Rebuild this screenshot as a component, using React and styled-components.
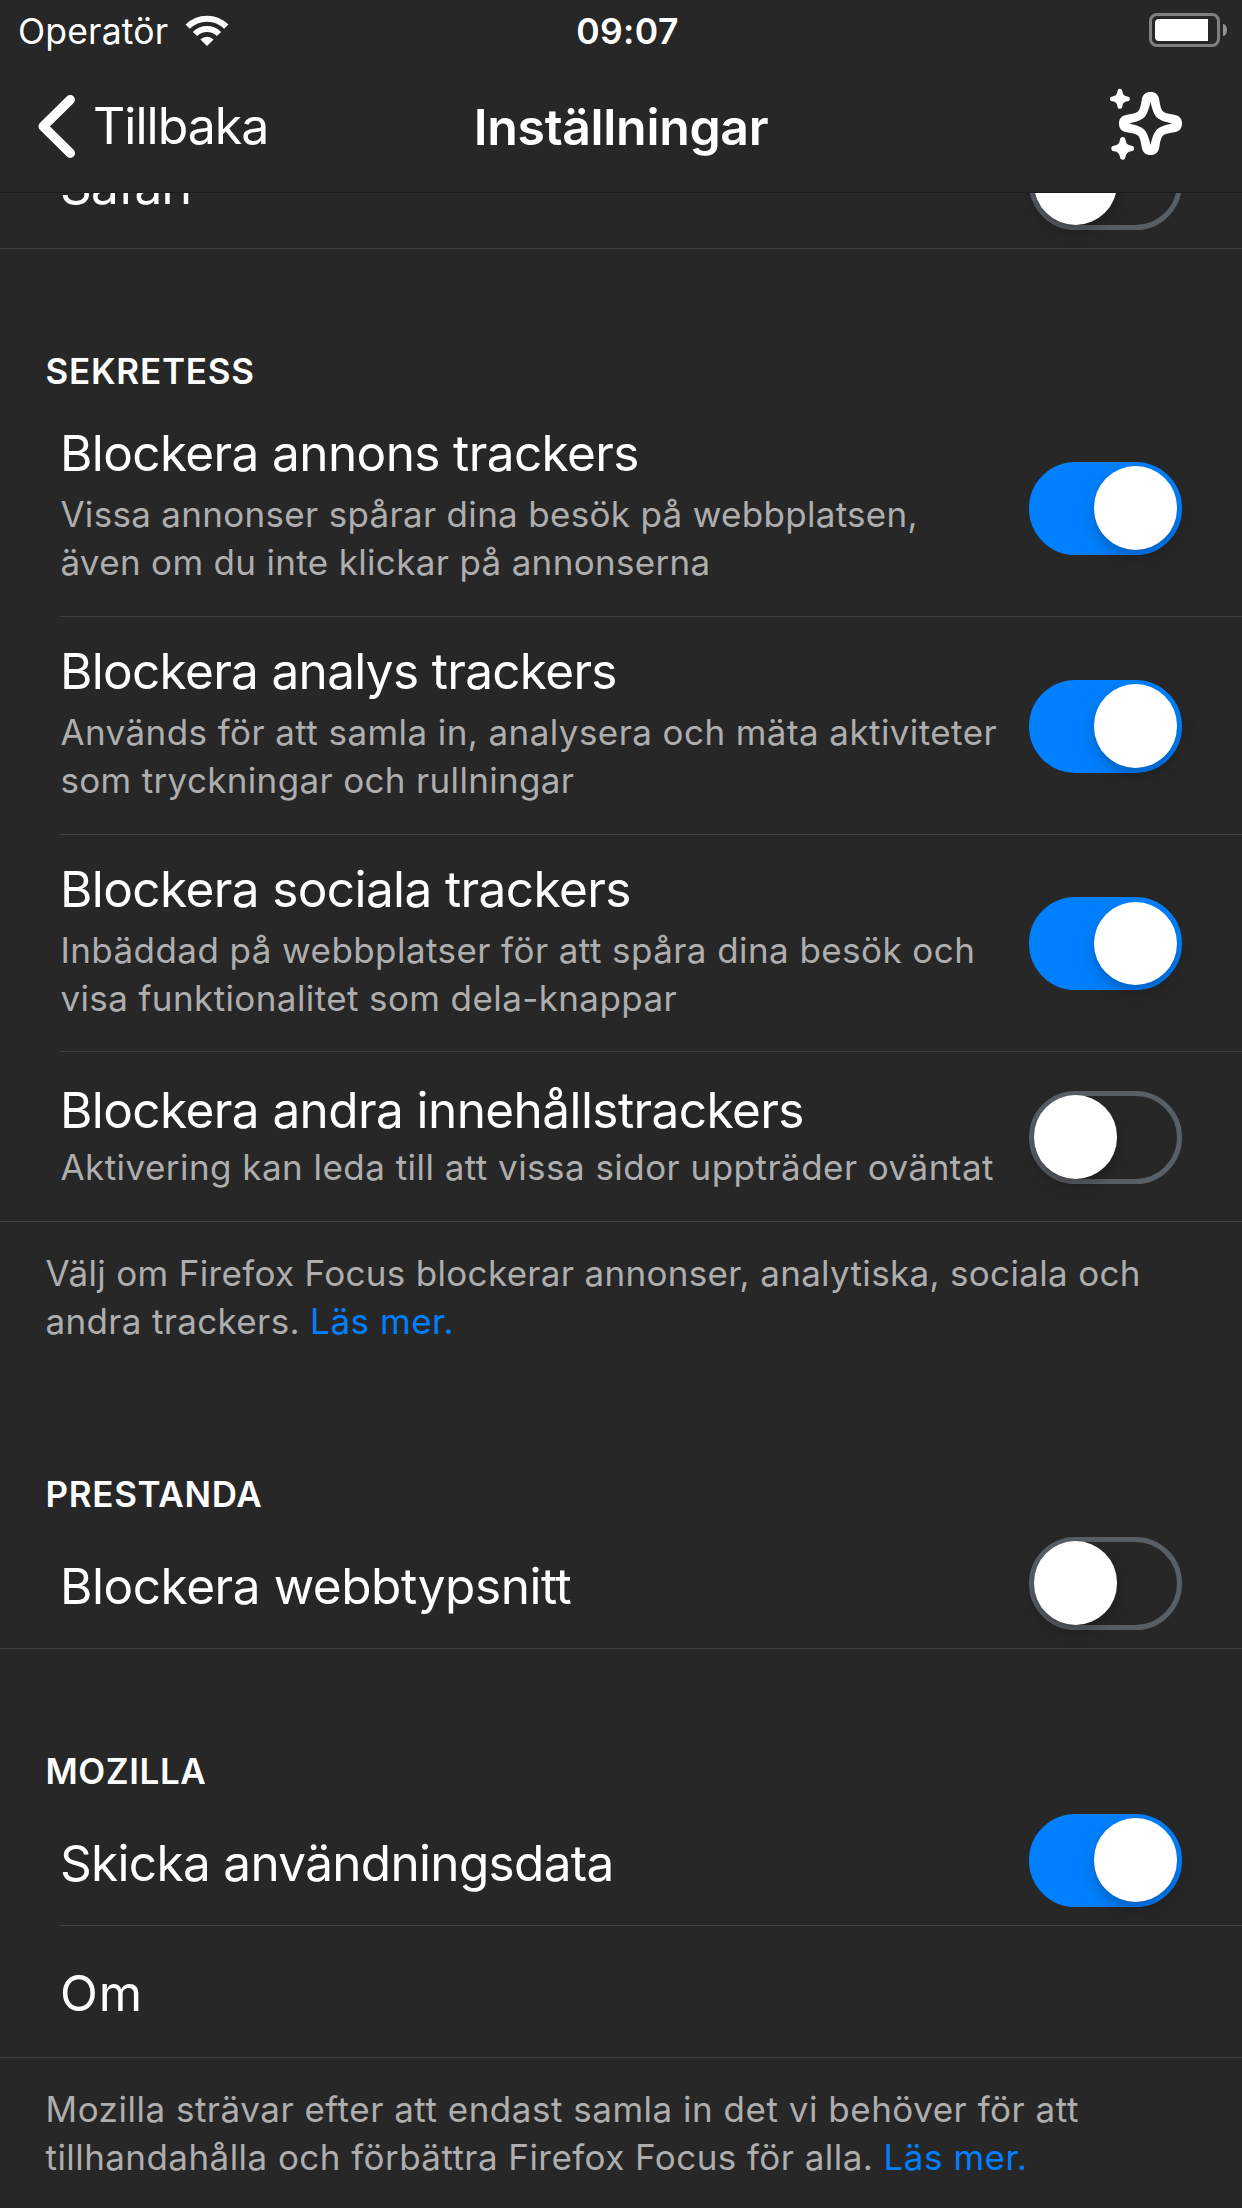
import React, { useState } from 'react';
import styled, { createGlobalStyle } from 'styled-components';

const GlobalStyle = createGlobalStyle`
  * { box-sizing: border-box; }
  html, body { margin: 0; background: #272727; }
  body {
    font-family: Inter, Roboto, "Liberation Sans", sans-serif;
    color: #fff;
    -webkit-font-smoothing: antialiased;
  }
`;

const Screen = styled.div`
  display: flex;
  flex-direction: column;
  width: 1242px;
  height: 2208px;
  overflow: hidden;
  background: #272727;
`;

/* Text with its own tracking */
const T = styled.span`
  white-space: pre;
  letter-spacing: ${(p) => p.$ls || 0}px;
`;

const StatusBar = styled.header`
  display: grid;
  grid-template-columns: 1fr auto 1fr;
  align-items: center;
  flex: none;
  height: 62px;
  padding: 0 15px 0 18px;
  font-size: 35.5px;
  line-height: 60px;
`;

const Carrier = styled.div`
  display: flex;
  align-items: center;
  gap: 17px;

  span { padding-top: 2px; }
`;

const Clock = styled.div`
  padding: 2px 0 0 10px;
  font-weight: 600;
`;

const Battery = styled.div`
  display: flex;
  align-items: center;
  justify-content: flex-end;
  gap: 3px;
  padding-bottom: 2px;
`;

const BatteryShell = styled.div`
  width: 71px;
  height: 34px;
  padding: 3px;
  border: 3px solid #808080;
  border-radius: 8px;
`;

const BatteryFill = styled.div`
  width: 53px;
  height: 22px;
  border-radius: 4px 0 0 4px;
  background: #fff;
`;

const BatteryNub = styled.div`
  width: 4px;
  height: 12px;
  border-radius: 0 4px 4px 0 / 0 6px 6px 0;
  background: #939393;
`;

const NavBar = styled.nav`
  display: grid;
  grid-template-columns: 1fr auto 1fr;
  align-items: center;
  flex: none;
  height: 131px;
  padding: 0 60px 2px 38px;
  border-bottom: 1px solid #1b1b1b;
  font-size: 50px;
  line-height: 60px;
`;

const BackButton = styled.button`
  display: flex;
  align-items: center;
  gap: 17px;
  padding: 0;
  border: 0;
  background: none;
  color: inherit;
  font: inherit;
`;

const NavTitle = styled.h1`
  margin: 0;
  padding: 1px 0 0 22px;
  font-size: 50px;
  font-weight: 600;
`;

const NavAction = styled.div`
  display: flex;
  justify-content: flex-end;
`;

const ScrollArea = styled.main`
  flex: 1;
  min-height: 0;
  overflow: hidden;
`;

const ScrolledRow = styled.div`
  display: flex;
  flex-direction: column;
  justify-content: flex-end;
  height: 56px;
  overflow: hidden;
`;

const Section = styled.section`
  display: flex;
  flex-direction: column;
`;

const SectionTitle = styled.h2`
  margin: 0;
  height: ${(p) => p.$height}px;
  padding: ${(p) => p.$top}px 45.5px 0;
  font-size: 35px;
  font-weight: 600;
  line-height: 48px;
`;

const Row = styled.div`
  display: flex;
  flex: none;
  height: ${(p) => p.$height}px;
  margin-left: ${(p) => (p.$last ? 0 : 60)}px;
  padding-left: ${(p) => (p.$last ? 60 : 0)}px;
  padding-right: 60px;
  border-bottom: 1px solid #414141;
`;

const Labels = styled.div`
  display: flex;
  flex: 1;
  flex-direction: column;
  padding-top: ${(p) => p.$top}px;
`;

const Title = styled.div`
  font-size: 49.5px;
  line-height: 60px;
`;

const Subtitle = styled.div`
  display: flex;
  flex-direction: column;
  margin-top: ${(p) => p.$gap}px;
  padding-left: 0.4px;
  color: #aeaeae;
  font-size: 35px;
  line-height: 48px;
`;

const Track = styled.button`
  display: flex;
  align-items: center;
  align-self: center;
  justify-content: ${(p) => (p.$on ? 'flex-end' : 'flex-start')};
  flex: none;
  width: 153px;
  height: 93px;
  margin: 1px 0 0;
  padding: 0;
  border: 5px solid ${(p) => (p.$on ? '#0080ff' : '#595f66')};
  border-radius: 47px;
  background: ${(p) => (p.$on ? '#0080ff' : 'transparent')};
`;

const Thumb = styled.span`
  width: 83.5px;
  height: 83.5px;
  margin: 0 -0.25px;
  border-radius: 50%;
  background: #fff;
  box-shadow: 0 8px 22px rgba(0, 0, 0, 0.16), 0 6px 6px rgba(0, 0, 0, 0.1);
`;

const Footer = styled.p`
  display: flex;
  flex-direction: column;
  margin: 0;
  height: ${(p) => p.$height}px;
  padding: 27px 45.5px 0;
  color: #aeaeae;
  font-size: 35px;
  line-height: 48px;
`;

const Link = styled.a`
  color: #0080ff;
  letter-spacing: 0.53px;
`;

const Wifi = () => (
  <svg width="44" height="32" viewBox="185 14 44 32" fill="none">
    <path d="M187.7 25.7A27.3 27.3 0 0 1 226.3 25.7" stroke="#fff" strokeWidth="6" />
    <path d="M195 33A17 17 0 0 1 219 33" stroke="#fff" strokeWidth="6" />
    <path d="M207 45L200.4 38.4A9.5 9.5 0 0 1 213.6 38.4Z" fill="#fff" />
  </svg>
);

const Chevron = () => (
  <svg width="38" height="65" viewBox="38 94 38 65" fill="none">
    <path d="M70.3 99.7L43.2 126.4L70.3 153.2" stroke="#fff" strokeWidth="9.4" strokeLinecap="round" strokeLinejoin="round" />
  </svg>
);

const SMALL_STAR =
  'M0 -10C1.6 -10 2.2 -9 2.4 -7.6C2.8 -4.4 4.4 -2.8 7.6 -2.4C9 -2.2 10 -1.6 10 0C10 1.6 9 2.2 7.6 2.4C4.4 2.8 2.8 4.4 2.4 7.6C2.2 9 1.6 10 0 10C-1.6 10 -2.2 9 -2.4 7.6C-2.8 4.4 -4.4 2.8 -7.6 2.4C-9 2.2 -10 1.6 -10 0C-10 -1.6 -9 -2.2 -7.6 -2.4C-4.4 -2.8 -2.8 -4.4 -2.4 -7.6C-2.2 -9 -1.6 -10 0 -10Z';

const Sparkles = () => (
  <svg width="73" height="77" viewBox="1109 88 73 77" fill="#fff">
    <path
      transform="translate(1150.5 123.5)"
      fillRule="evenodd"
      d="M-8.8 -23.5C-8 -29 -4.8 -31.5 0 -31.5C4.8 -31.5 8 -29 8.8 -23.5C9.8 -17 10.8 -13.8 12.3 -12.3C13.8 -10.8 17 -9.8 23.5 -8.8C29 -8 31.5 -4.8 31.5 0C31.5 4.8 29 8 23.5 8.8C17 9.8 13.8 10.8 12.3 12.3C10.8 13.8 9.8 17 8.8 23.5C8 29 4.8 31.5 0 31.5C-4.8 31.5 -8 29 -8.8 23.5C-9.8 17 -10.8 13.8 -12.3 12.3C-13.8 10.8 -17 9.8 -23.5 8.8C-29 8 -31.5 4.8 -31.5 0C-31.5 -4.8 -29 -8 -23.5 -8.8C-17 -9.8 -13.8 -10.8 -12.3 -12.3C-10.8 -13.8 -9.8 -17 -8.8 -23.5Z
      M0 -21.5C1.8 -13.5 3.5 -9 6.2 -6.2C9 -3.5 13.5 -1.8 21.5 0C13.5 1.8 9 3.5 6.2 6.2C3.5 9 1.8 13.5 0 21.5C-1.8 13.5 -3.5 9 -6.2 6.2C-9 3.5 -13.5 1.8 -21.5 0C-13.5 -1.8 -9 -3.5 -6.2 -6.2C-3.5 -9 -1.8 -13.5 0 -21.5Z"
    />
    <path transform="translate(1119.9 98.8)" d={SMALL_STAR} />
    <path transform="translate(1122.7 148.4) scale(1.14)" d={SMALL_STAR} />
  </svg>
);

function Toggle({ initial, label }) {
  const [on, setOn] = useState(initial);
  return (
    <Track role="switch" aria-checked={on} aria-label={label} $on={on} onClick={() => setOn(!on)}>
      <Thumb />
    </Track>
  );
}

function Setting({ height, top, title, ls, lines, gap, on, last }) {
  return (
    <Row $height={height} $last={last}>
      <Labels $top={top}>
        <Title><T $ls={ls}>{title}</T></Title>
        {lines && (
          <Subtitle $gap={gap}>
            {lines.map(([text, spacing]) => <T key={text} $ls={spacing}>{text}</T>)}
          </Subtitle>
        )}
      </Labels>
      {on !== undefined && <Toggle initial={on} label={title} />}
    </Row>
  );
}

const PRIVACY = [
  { height: 218, top: 24, gap: 7, on: true, title: 'Blockera annons trackers', ls: -0.61,
    lines: [['Vissa annonser spårar dina besök på webbplatsen,', 0.31], ['även om du inte klickar på annonserna', 0.33]] },
  { height: 218, top: 24, gap: 7, on: true, title: 'Blockera analys trackers', ls: -0.68,
    lines: [['Används för att samla in, analysera och mäta aktiviteter', 0.42], ['som tryckningar och rullningar', 0.34]] },
  { height: 217, top: 24, gap: 7, on: true, title: 'Blockera sociala trackers', ls: -0.6,
    lines: [['Inbäddad på webbplatser för att spåra dina besök och', 0.43], ['visa funktionalitet som dela-knappar', 0.4]] },
  { height: 170, top: 28, gap: 3, on: false, last: true, title: 'Blockera andra innehållstrackers', ls: -0.58,
    lines: [['Aktivering kan leda till att vissa sidor uppträder oväntat', 0.46]] },
];

export default function App() {
  return (
    <>
      <GlobalStyle />
      <Screen>
        <StatusBar>
          <Carrier><T $ls={0.18}>Operatör</T><Wifi /></Carrier>
          <Clock><T $ls={0.37}>09:07</T></Clock>
          <Battery>
            <BatteryShell><BatteryFill /></BatteryShell>
            <BatteryNub />
          </Battery>
        </StatusBar>
        <NavBar>
          <BackButton><Chevron /><T $ls={-0.99}>Tillbaka</T></BackButton>
          <NavTitle><T $ls={-0.33}>Inställningar</T></NavTitle>
          <NavAction><Sparkles /></NavAction>
        </NavBar>
        <ScrollArea>
          <ScrolledRow>
            <Setting height={132} top={39} title="Safari" ls={-0.85} on={false} last />
          </ScrolledRow>
          <Section>
            <SectionTitle $height={150} $top={98}><T $ls={0.76}>SEKRETESS</T></SectionTitle>
            {PRIVACY.map((item) => <Setting key={item.title} {...item} />)}
            <Footer $height={150}>
              <T $ls={0.32}>Välj om Firefox Focus blockerar annonser, analytiska, sociala och</T>
              <T $ls={0.34}>andra trackers. <Link>Läs mer.</Link></T>
            </Footer>
          </Section>
          <Section>
            <SectionTitle $height={145} $top={98}><T $ls={0.68}>PRESTANDA</T></SectionTitle>
            <Setting height={132} top={39} title="Blockera webbtypsnitt" ls={-0.44} on={false} last />
          </Section>
          <Section>
            <SectionTitle $height={145} $top={98}><T $ls={0.58}>MOZILLA</T></SectionTitle>
            <Setting height={132} top={39} title="Skicka användningsdata" ls={-0.68} on />
            <Setting height={132} top={37} title="Om" ls={0.8} last />
            <Footer $height={150}>
              <T $ls={0.51}>Mozilla strävar efter att endast samla in det vi behöver för att</T>
              <T $ls={0.44}>tillhandahålla och förbättra Firefox Focus för alla. <Link>Läs mer.</Link></T>
            </Footer>
          </Section>
        </ScrollArea>
      </Screen>
    </>
  );
}
